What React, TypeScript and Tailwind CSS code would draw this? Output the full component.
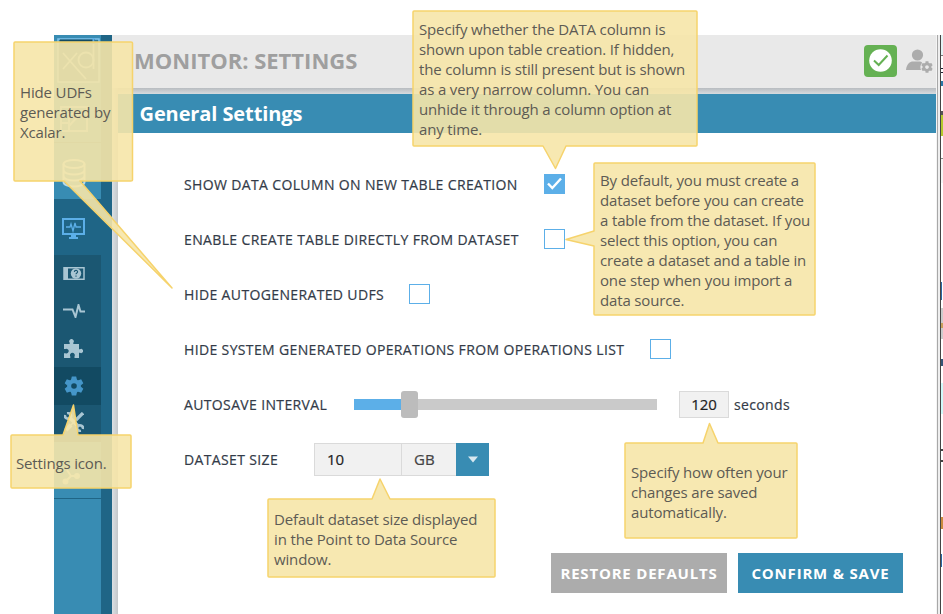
import React from "react";
import { FaCog } from "react-icons/fa";

type CalloutProps = {
  box: string;
  lines: string[];
  text: string;
  w: number;
  h: number;
  path: string;
};

/* Translucent sticky note with a pointer; the path is drawn relative to the note's corner. */
function Callout({ box, lines, text, w, h, path }: CalloutProps) {
  return (
    <div className={`absolute ${box}`}>
      <svg className="absolute left-0 top-0 overflow-visible" width={w} height={h}>
        <path d={path} fill="rgb(246,229,168)" fillOpacity="0.9" stroke="#f6d36c" strokeWidth="1.5" strokeLinejoin="round" />
      </svg>
      <div className={`relative whitespace-nowrap text-[15px] leading-5 tracking-[-0.15px] text-[#5d5b54] ${text}`}>
        {lines.map((l) => (
          <p key={l}>{l}</p>
        ))}
      </div>
    </div>
  );
}

function Checkbox({ checked = false }: { checked?: boolean }) {
  return (
    <span className={`mb-0.5 flex h-[20px] w-[21px] items-center justify-center border border-[#5cafe8] ${checked ? "bg-[#5cafe8]" : "bg-white"}`}>
      {checked && (
        <svg className="shrink-0" width="17" height="15" viewBox="0 0 17 15">
          <path d="M2 7.5 6.3 12 15 2.5" fill="none" stroke="#fff" strokeWidth="2.4" />
        </svg>
      )}
    </span>
  );
}

function Row({ label, width, children }: { label: string; width: string; children?: React.ReactNode }) {
  return (
    <div className="flex h-[55px] items-center">
      <span className={`shrink-0 whitespace-nowrap text-[14px] tracking-[0.36px] text-[#333b48] [-webkit-text-stroke:0.2px] ${width}`}>{label}</span>
      {children}
    </div>
  );
}

function Sidebar() {
  return (
    <nav className="flex w-[58px] shrink-0 bg-[#1f6586]">
      <div className="flex w-[47px] flex-col bg-[#388cb3] text-[#a9c6d3]">
        <div className="flex h-[53px] items-start justify-center pt-[3px]">
          <svg width="46" height="46" viewBox="0 0 46 46" fill="none">
            <rect x="3" y="1" width="41" height="43" fill="#2b7596" stroke="#7fc4ee" strokeWidth="1.5" />
            <path d="M5 2.500h35" stroke="#124a62" strokeWidth="2" />
            <path d="M38.500 0v5" stroke="#5cafe8" strokeWidth="2" />
            <path d="M8 15 22 31M22 15 8 31M22 31l9 10M38.500 6v25" stroke="#8fc1da" strokeWidth="1.800" />
            <circle cx="31" cy="22" r="7.500" stroke="#8fc1da" strokeWidth="1.800" />
          </svg>
        </div>
        <div className="flex h-[55px] items-center justify-center border-b border-[#1f6586] pr-2 pt-2">
          <svg width="28" height="26" viewBox="0 0 28 26" fill="none" stroke="#8fc1da" strokeWidth="2">
            <path d="M1 1h26v24H1zM1 8h26M1 17h9M9 8v17M9 20 19 9" />
          </svg>
        </div>
        <div className="flex h-14 items-center justify-center pr-2 pt-1">
          <svg width="24" height="29" viewBox="0 0 24 29" fill="none" stroke="#b8d9e8" strokeWidth="2">
            <ellipse cx="12" cy="5" rx="10.5" ry="4" />
            <path d="M1.500 5v18c0 6 21 6 21 0V5M1.500 11c0 6 21 6 21 0M1.500 17c0 6 21 6 21 0" />
          </svg>
        </div>
        <div className="flex h-14 items-center justify-center bg-[#1f6586] pr-2 pt-[3px]">
          <svg width="23" height="21" viewBox="0 0 23 21">
            <path d="M1 1h21v15H1z" fill="none" stroke="#5cafe8" strokeWidth="2" />
            <path d="M4 9h4l1-3 2 7 2-8 1 4h5" fill="none" stroke="#5cafe8" strokeWidth="1.300" />
            <path d="M9 17h5v2h2v2H7v-2h2z" fill="#5cafe8" />
          </svg>
        </div>
        <div className="flex h-[187px] flex-col bg-[#1b5772]">
          <div className="flex h-[37px] items-center justify-center pr-2">
            <svg width="22" height="13" viewBox="0 0 22 13">
              <path d="M1 .8h20v11.400H1z" fill="none" stroke="#a9c6d3" strokeWidth="1.500" />
              <path d="M1 1h4v11H1z" fill="#a9c6d3" />
              <circle cx="13" cy="6.500" r="5.200" fill="#a9c6d3" />
              <path d="M11.300 5c.2-2.300 3.500-2 3.300 0-.2 1-1.600 1-1.600 2.300M13 8.500v1.300" fill="none" stroke="#1b5772" strokeWidth="1.100" />
            </svg>
          </div>
          <div className="flex h-[37px] items-center justify-center pr-2">
            <svg width="22" height="14" viewBox="0 0 22 14">
              <path d="M0 5.500h9.500l3 7.500L15.500 1l2 6.500H22" fill="none" stroke="#a9c6d3" strokeWidth="2" />
            </svg>
          </div>
          <div className="flex h-[38px] items-center justify-center pr-2">
            <svg width="19" height="19" viewBox="0 0 19 19" fill="currentColor">
              <path d="M0 5h5.700V3.800a2.300 2.300 0 1 1 3.600 0V5H15v5.200h1a2.100 2.100 0 1 1 0 3.600h-1V19h-4.500v-1.600a2.400 2.400 0 1 0-4.200 0V19H0v-4.800h1.500a2.300 2.300 0 1 0 0-4.200H0z" />
            </svg>
          </div>
          <div className="flex h-[38px] items-center justify-center bg-[#124a62] pb-px pr-2 text-[#4596c9]">
            <svg width="20" height="20" viewBox="-10 -10 20 20">
              <circle r="7" fill="currentColor" />
              <path d="M-2.200-9.500h4.400L3-6h-6zM-2.200 9.500h4.400L3 6h-6z" fill="currentColor" />
              <path d="M-2.200-9.500h4.400L3-6h-6zM-2.200 9.500h4.400L3 6h-6z" fill="currentColor" transform="rotate(60)" />
              <path d="M-2.200-9.500h4.400L3-6h-6zM-2.200 9.500h4.400L3 6h-6z" fill="currentColor" transform="rotate(-60)" />
              <circle r="2.800" fill="#124a62" />
            </svg>
          </div>
          <div className="flex h-[37px] items-center justify-center pb-1 pr-2">
            <svg width="20" height="20" viewBox="0 0 20 20" fill="none" stroke="currentColor">
              <path d="M5 5 15 15" strokeWidth="3.500" />
              <path d="M1 3a3.200 3.200 0 0 0 6 2M3 1a3.500 3.500 0 0 1 4 4M19 17a3.200 3.200 0 0 0-6-2M17 19a3.500 3.500 0 0 1-4-4" strokeWidth="2.600" />
              <path d="M19 1 12 8" strokeWidth="3.200" />
              <path d="M12 8 6 14" strokeWidth="1.500" />
              <path d="M7 13 2 18" strokeWidth="4" />
            </svg>
          </div>
        </div>
        <div className="flex h-[57px] items-center justify-center border-b border-[#1f6586] pr-3 pt-3">
          <svg width="19" height="19" viewBox="0 0 19 19" fill="#b8d9e8" stroke="#b8d9e8" strokeWidth="2">
            <path d="M5 3l4 6-5 5M9 9h6" fill="none" />
            <circle cx="3.500" cy="14.500" r="2" />
            <circle cx="15" cy="9" r="2" />
          </svg>
        </div>
      </div>
    </nav>
  );
}

/* Sliver of the neighbouring window along the right edge. */
function EdgeStrip() {
  return (
    <div className="flex w-[7px] shrink-0">
      <div className="w-px bg-[#f4f4f4]" />
      <div className="w-px bg-[#a8a8a8]" />
      <div className="w-0.5 bg-[#eeeeee]" />
      <div className="w-px bg-[#444]" />
      <div className="flex w-0.5 flex-col">
        <div className="h-[21px] border-b border-[#777] bg-[#e4f3f5]" />
        <div className="mt-[12px] h-[5px] border-y border-[#223]" />
        <div className="mt-2 h-[5px] bg-[#2878a8]" />
        <div className="mt-[25px] h-1 bg-[#555]" />
        <div className="h-[21px] bg-[#b4c92d]" />
        <div className="mt-[22px] h-px bg-[#888]" />
        <div className="h-6 bg-[#f5f5f5]" />
        <div className="mt-[99px] flex h-[18px]"><div className="w-px bg-[#2a67a5]" /></div>
        <div className="mt-2 h-[31px] bg-[#ccc] pt-[15px]"><div className="h-[5px] bg-[#c9a05d]" /></div>
        <div className="mt-[20px] h-[7px] bg-[#357]" />
        <div className="mt-[17px] h-[31px] bg-[#d0fafa]" />
        <div className="mt-[35px] h-[13px] border-y-2 border-[#444]" />
        <div className="mt-[55px] h-3 bg-[#c98a3d]" />
        <div className="mt-[25px] flex h-[13px]"><div className="w-px bg-[#2a67a5]" /></div>
      </div>
    </div>
  );
}

export default function App() {
  return (
    <div className="relative h-[614px] w-[943px] overflow-hidden bg-white pt-[35px] font-['Open_Sans',sans-serif]">
      <div className="flex h-[579px] pl-[54px]">
        <Sidebar />
        <div className="flex w-[824px] flex-col">
          <header className="flex h-[53px] shrink-0 items-center justify-between bg-[#e9e9e9] pl-[22px] pr-[3px]">
            <h1 className="whitespace-nowrap pb-0.5 text-[22px] font-bold text-[#9f9f9f]">MONITOR: SETTINGS</h1>
            <div className="flex items-center pb-0.5">
              <div className="mr-[9px] flex h-8 w-[33px] items-center justify-center rounded-sm bg-[#65b153]">
                <svg width="23" height="23" viewBox="0 0 23 23">
                  <circle cx="11.500" cy="11.500" r="11.300" fill="#fff" />
                  <path d="M5 11.500 9.700 16 18.500 6.500" fill="none" stroke="#65b153" strokeWidth="2" />
                </svg>
              </div>
              <svg width="27" height="25" viewBox="0 0 27 25" fill="#acacac">
                <circle cx="11.500" cy="7" r="5.600" />
                <path d="M0 22c.5-6 4-8.500 7-8.500h7c1.500.3 2 .8 2 1.500-2 2-2 5-1 7z" />
                <svg x="15" y="13" width="12" height="12"><FaCog size={12} color="#acacac" /></svg>
              </svg>
            </div>
          </header>
          <div className="flex grow">
            <div className="w-1.5 shrink-0 bg-gradient-to-r from-[#dadfe3] to-[#c3c7ca]" />
            <main className="flex grow flex-col">
              <div className="h-1.5 bg-gradient-to-b from-[#b8bcc0] to-[#d6dbdf]" />
              <h2 className="flex h-[39px] items-center whitespace-nowrap bg-[#388cb3] pl-[21.5px] text-[20px] font-bold tracking-[-0.1px] text-white">General Settings</h2>
              <section className="pl-[66px] pt-[24px]">
                <Row label="SHOW DATA COLUMN ON NEW TABLE CREATION" width="w-[360px]"><Checkbox checked /></Row>
                <Row label="ENABLE CREATE TABLE DIRECTLY FROM DATASET" width="w-[360px]"><Checkbox /></Row>
                <Row label="HIDE AUTOGENERATED UDFS" width="w-[225px]"><Checkbox /></Row>
                <Row label="HIDE SYSTEM GENERATED OPERATIONS FROM OPERATIONS LIST" width="w-[466px]"><Checkbox /></Row>
                <Row label="AUTOSAVE INTERVAL" width="w-[170px]">
                  <div className="flex w-[303px] items-center">
                    <div className="h-[11px] w-[47px] bg-[#5cafe8]" />
                    <div className="h-[27px] w-[17px] rounded-[3px] bg-[#bcbcbc]" />
                    <div className="h-[11px] grow bg-[#cacaca]" />
                  </div>
                  <div className="ml-[22px] flex h-[27px] w-[50px] items-center justify-center border border-[#dadada] bg-[#f1f1f1] text-[15px] text-[#222] [-webkit-text-stroke:0.2px]">120</div>
                  <span className="ml-[5px] text-[14px] tracking-[0.36px] text-[#333b48] [-webkit-text-stroke:0.2px]">seconds</span>
                </Row>
                <Row label="DATASET SIZE" width="w-[130px]">
                  <div className="flex h-[33px] w-[88px] items-center border border-[#dadada] bg-[#f1f1f1] pl-3 text-[15px] text-[#222] [-webkit-text-stroke:0.2px]">10</div>
                  <div className="flex h-[33px] w-[54px] items-center border-y border-[#dadada] bg-[#f1f1f1] pl-3 text-[15px] text-[#444] [-webkit-text-stroke:0.2px]">GB</div>
                  <div className="flex h-[33px] w-[33px] items-center justify-center bg-[#388cb3]">
                    <svg width="10" height="7" viewBox="0 0 10 7"><path d="M0 .5h10L5 6.500z" fill="#d7e8f0" /></svg>
                  </div>
                </Row>
              </section>
              <div className="mt-[66px] flex gap-[11px] pl-[433px]">
                <button className="h-10 w-[176px] whitespace-nowrap bg-[#acacac] text-[15px] font-bold tracking-[0.8px] text-white">RESTORE DEFAULTS</button>
                <button className="h-10 w-[165px] whitespace-nowrap bg-[#388cb3] text-[15px] font-bold tracking-[0.8px] text-white">CONFIRM &amp; SAVE</button>
              </div>
            </main>
          </div>
        </div>
        <EdgeStrip />
      </div>

      <Callout box="left-[13px] top-[41px]" w={120} h={140} text="pl-[7px] pt-[41px]"
        path="M2 1H118Q119.500 1 119.500 2V139Q119.500 140 118 140H67L159 247L51 140H2Q1 140 1 139V2Q1 1 2 1Z"
        lines={["Hide UDFs", "generated by", "Xcalar."]} />
      <Callout box="left-[10px] top-[434px]" w={121} h={54} text="pl-[6px] pt-[19px]"
        path="M2 1H53L63.500 -29L68 1H120Q121 1 121 2V53Q121 54 120 54H2Q1 54 1 53V2Q1 1 2 1Z"
        lines={["Settings icon."]} />
      <Callout box="left-[412px] top-[10px]" w={285} h={136} text="pl-[7px] pt-[9px]"
        path="M2 1H284Q285 1 285 2V135Q285 136 284 136H154L143.500 158.500L131 136H2Q1 136 1 135V2Q1 1 2 1Z"
        lines={["Specify whether the DATA column is", "shown upon table creation. If hidden,", "the column is still present but is shown", "as a very narrow column. You can", "unhide it through a column option at", "any time."]} />
      <Callout box="left-[593px] top-[162px]" w={222} h={153} text="pl-[7px] pt-[8px]"
        path="M2 1H221Q222 1 222 2V152Q222 153 221 153H2Q1 153 1 152V84L-27 77.500L1 69V2Q1 1 2 1Z"
        lines={["By default, you must create a", "dataset before you can create", "a table from the dataset. If you", "select this option, you can", "create a dataset and a table in", "one step when you import a", "data source."]} />
      <Callout box="left-[267px] top-[498px]" w={228} h={79} text="pl-[7px] pt-[11px]"
        path="M2 1H105L113 -19L123 1H227Q228 1 228 2V78Q228 79 227 79H2Q1 79 1 78V2Q1 1 2 1Z"
        lines={["Default dataset size displayed", "in the Point to Data Source", "window."]} />
      <Callout box="left-[624px] top-[442px]" w={173} h={96} text="pl-[7px] pt-[20px]"
        path="M2 1H79L85.500 -18.500L94 1H172Q173 1 173 2V95Q173 96 172 96H2Q1 96 1 95V2Q1 1 2 1Z"
        lines={["Specify how often your", "changes are saved", "automatically."]} />
    </div>
  );
}
